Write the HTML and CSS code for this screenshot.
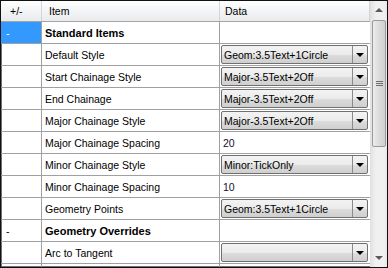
FILE: index.html
```html
<!DOCTYPE html>
<html>
<head>
<meta charset="utf-8">
<link rel="stylesheet" href="styles.css">
</head>
<body>
<div class="frame">
  <div class="grid">
    <div class="row head">
      <div class="c1">+/-</div>
      <div class="c2">Item</div>
      <div class="c3">Data</div>
    </div>
    <div class="row group">
      <div class="c1 sel">-</div>
      <div class="c2">Standard Items</div>
      <div class="c3"></div>
    </div>
    <div class="row">
      <div class="c1"></div>
      <div class="c2">Default Style</div>
      <div class="c3"><div class="combo"><span class="val">Geom:3.5Text+1Circle</span><span class="btn"><i class="tri"></i></span></div></div>
    </div>
    <div class="row">
      <div class="c1"></div>
      <div class="c2">Start Chainage Style</div>
      <div class="c3"><div class="combo"><span class="val">Major-3.5Text+2Off</span><span class="btn"><i class="tri"></i></span></div></div>
    </div>
    <div class="row">
      <div class="c1"></div>
      <div class="c2">End Chainage</div>
      <div class="c3"><div class="combo"><span class="val">Major-3.5Text+2Off</span><span class="btn"><i class="tri"></i></span></div></div>
    </div>
    <div class="row">
      <div class="c1"></div>
      <div class="c2">Major Chainage Style</div>
      <div class="c3"><div class="combo"><span class="val">Major-3.5Text+2Off</span><span class="btn"><i class="tri"></i></span></div></div>
    </div>
    <div class="row">
      <div class="c1"></div>
      <div class="c2">Major Chainage Spacing</div>
      <div class="c3 num">20</div>
    </div>
    <div class="row">
      <div class="c1"></div>
      <div class="c2">Minor Chainage Style</div>
      <div class="c3"><div class="combo"><span class="val">Minor:TickOnly</span><span class="btn"><i class="tri"></i></span></div></div>
    </div>
    <div class="row">
      <div class="c1"></div>
      <div class="c2">Minor Chainage Spacing</div>
      <div class="c3 num">10</div>
    </div>
    <div class="row">
      <div class="c1"></div>
      <div class="c2">Geometry Points</div>
      <div class="c3"><div class="combo"><span class="val">Geom:3.5Text+1Circle</span><span class="btn"><i class="tri"></i></span></div></div>
    </div>
    <div class="row group">
      <div class="c1 dash">-</div>
      <div class="c2">Geometry Overrides</div>
      <div class="c3"></div>
    </div>
    <div class="row">
      <div class="c1"></div>
      <div class="c2">Arc to Tangent</div>
      <div class="c3"><div class="combo"><span class="val"></span><span class="btn"><i class="tri"></i></span></div></div>
    </div>
    <div class="row">
      <div class="c1"></div>
      <div class="c2"></div>
      <div class="c3"></div>
    </div>
  </div>
  <div class="sbar">
    <div class="arrow"><i class="up"></i></div>
    <div class="track">
      <div class="thumb"><span class="grip"></span></div>
    </div>
    <div class="arrow"><i class="down"></i></div>
  </div>
</div>
</body>
</html>
```
FILE: styles.css
```css
html, body {
  margin: 0;
  padding: 0;
  background: #fff;
}
body {
  font-family: "Liberation Sans", Arial, sans-serif;
  font-size: 10.5px;
  color: #000;
}
.frame {
  box-sizing: border-box;
  width: 388px;
  height: 268px;
  border: 1px solid #111;
  box-shadow: inset 1px -1px 0 #707070;
  display: flex;
  overflow: hidden;
  background: #fff;
}
.grid {
  width: 369px;
  display: flex;
  flex-direction: column;
  overflow: hidden;
}
.row {
  display: flex;
  height: 22px;
  flex: none;
  box-sizing: border-box;
  border-bottom: 1px solid #a0a0a0;
}
.row > div {
  box-sizing: border-box;
  display: flex;
  align-items: center;
  white-space: nowrap;
}
.c1 {
  width: 41px;
  border-right: 1px solid #a0a0a0;
  padding-left: 5px;
}
.c2 {
  width: 178px;
  border-right: 1px solid #a0a0a0;
  padding-left: 3px;
}
.c3 {
  flex: 1;
  padding-left: 1px;
}
.num {
  padding-left: 3px;
  color: #101030;
}
.head {
  height: 21px;
  background: linear-gradient(#ffffff, #f1f2f4 60%, #e9eaec);
  border-bottom: 1px solid #a5a5a5;
}
.head .c1 {
  border-right-color: #d5d5d5;
  padding-left: 9px;
}
.head .c2 {
  border-right-color: #d5d5d5;
  padding-left: 7px;
}
.head .c3 {
  padding-left: 5px;
  border-right: 1px solid #d5d5d5;
}
.group .c2 {
  font-weight: bold;
  font-size: 11px;
}
.sel {
  background: #3399ff;
  color: #fff;
  margin-bottom: 0;
}
.combo {
  box-sizing: border-box;
  width: 147px;
  height: 19px;
  border: 1px solid #707070;
  border-radius: 2px;
  background: linear-gradient(#f3f3f3, #ebebeb 50%, #dddddd 51%, #cfcfcf);
  display: flex;
  align-items: stretch;
}
.val {
  flex: 1;
  display: flex;
  align-items: center;
  padding-left: 2px;
}
.btn {
  width: 14px;
  border-left: 1px solid #8a8a8a;
  display: flex;
  align-items: center;
  justify-content: center;
}
.tri {
  width: 0;
  height: 0;
  border-left: 4px solid transparent;
  border-right: 4px solid transparent;
  border-top: 4px solid #000;
}
.sbar {
  width: 17px;
  display: flex;
  flex-direction: column;
  background: linear-gradient(90deg, #e3e3e3, #f0f0f0 30%, #f0f0f0 80%, #e8e8e8);
  border-left: 1px solid #e0e0e0;
  box-sizing: border-box;
}
.arrow {
  height: 18px;
  flex: none;
  display: flex;
  align-items: center;
  justify-content: center;
}
.up {
  width: 0;
  height: 0;
  border-left: 4px solid transparent;
  border-right: 4px solid transparent;
  border-bottom: 4px solid #5a5a5a;
}
.down {
  width: 0;
  height: 0;
  border-left: 4px solid transparent;
  border-right: 4px solid transparent;
  border-top: 4px solid #5a5a5a;
}
.track {
  flex: 1;
  padding: 1px 1px 0 1px;
}
.thumb {
  box-sizing: border-box;
  height: 127px;
  border: 1px solid #9a9a9a;
  border-radius: 2px;
  background: linear-gradient(90deg, #ececec, #dcdcdc 50%, #cfcfcf);
  display: flex;
  align-items: center;
  justify-content: center;
}
.grip {
  width: 7px;
  height: 5px;
  background: repeating-linear-gradient(#6f6f6f 0 1px, transparent 1px 2px);
}
```
